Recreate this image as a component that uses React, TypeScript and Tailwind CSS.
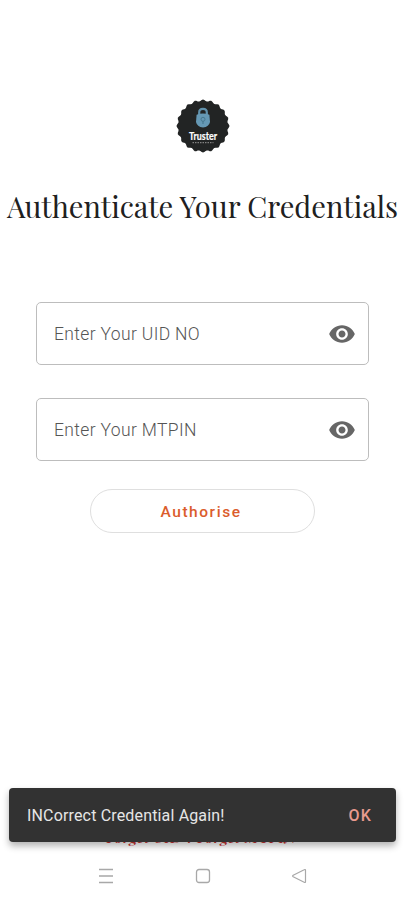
import React from "react";

function Badge() {
  const points = Array.from({ length: 120 }, (_, i) => {
    const a = (i / 120) * Math.PI * 2;
    const r = 25.6 + 0.9 * Math.cos(a * 20);
    return `${(27 + r * Math.sin(a)).toFixed(2)},${(27 - r * Math.cos(a)).toFixed(2)}`;
  }).join(" ");
  return (
    <svg className="ml-px h-[54px] w-[54px]" viewBox="0 0 54 54">
      <polygon points={points} fill="#222424" />
      <path d="M23.2 16v-2.6c0-4.6 7.6-4.6 7.6 0V16" fill="none" stroke="#6192ad" strokeWidth="2.2" />
      <path d="M20.6 15.8Q27 13.1 33.4 15.8L34 23Q33 27.9 27 28.5Q21 27.9 20 23Z" fill="#6598b4" />
      <circle cx="27" cy="20.3" r="2" fill="none" stroke="#487990" strokeWidth="1" />
      <path d="M27 22v3" stroke="#487990" strokeWidth="1.2" />
      <text x="13" y="40.5" textLength="28" lengthAdjust="spacingAndGlyphs" fill="#fff" stroke="#fff" strokeWidth=".2" className="font-['Lato'] text-[10.5px] font-bold">Truster</text>
      <path d="M16.5 43.7h21" stroke="#a5a5a5" strokeWidth=".9" strokeDasharray="1.5 1" />
    </svg>
  );
}

function Field({ label }: { label: string }) {
  return (
    <div className="flex h-[63px] w-[333px] items-center justify-between rounded-[5px] border-[1.5px] border-[#bdbdbd] pr-[12px] pl-[17px]">
      <span className="pt-px text-[17.5px] font-light tracking-[0.35px] text-[#555]">{label}</span>
      <svg className="h-[28px] w-[28px]" viewBox="0 0 24 24" fill="#666">
        <path d="M12 4.5C7 4.5 2.73 7.61 1 12c1.73 4.39 6 7.5 11 7.5s9.27-3.11 11-7.5c-1.73-4.39-6-7.5-11-7.5zM12 17c-2.76 0-5-2.24-5-5s2.24-5 5-5 5 2.24 5 5-2.24 5-5 5zm0-8c-1.66 0-3 1.34-3 3s1.34 3 3 3 3-1.34 3-3-1.34-3-3-3z" />
      </svg>
    </div>
  );
}

export default function App() {
  return (
    <main className="relative flex h-[900px] w-[404px] flex-col items-center overflow-hidden bg-white pt-[99px] font-['Roboto',sans-serif]">
      <Badge />
      <h1 className="mt-[31px] ml-[1px] h-[44px] text-[29.1px] leading-[44px] whitespace-nowrap text-[#202020] font-['Playfair_Display','Liberation_Serif',serif]">
        Authenticate Your Credentials
      </h1>
      <div className="mt-[74px] ml-[1px] flex flex-col gap-[33px]">
        <Field label="Enter Your UID NO" />
        <Field label="Enter Your MTPIN" />
      </div>
      <button className="mt-[28px] h-[44px] w-[225px] rounded-full border border-[#dfdfdf] pt-[3px] pr-[2px] text-[15.5px] font-medium tracking-[1.55px] text-[#db5c2c]">
        Authorise
      </button>
      <p className="mt-auto h-[25px] text-[15.6px] leading-[24px] font-semibold whitespace-nowrap text-[#c83232] italic font-['Playfair_Display','Liberation_Serif',serif]">
        Forget UID ? Forget MTPIN
      </p>
      <nav className="flex h-[50px] w-full items-center justify-between pt-[2px] pr-[96px] pl-[97px] text-[#a8a8a8]">
        <svg className="h-[18px] w-[18px]" viewBox="0 0 18 18" fill="none" stroke="currentColor" strokeWidth="1.3">
          <path d="M2 2.5h14M2 9h14M2 15.5h14" />
        </svg>
        <svg className="h-[18px] w-[18px]" viewBox="0 0 18 18" fill="none" stroke="currentColor" strokeWidth="1.3">
          <rect x="2.5" y="2.5" width="13" height="13" rx="2.5" />
        </svg>
        <svg className="h-[18px] w-[18px]" viewBox="0 0 18 18" fill="none" stroke="currentColor" strokeWidth="1.2" strokeLinejoin="round">
          <path d="M15.5 3.5v11q0 1.5-1.3.8L3.2 9.7q-1.1-.7 0-1.4l11-5.6q1.3-.7 1.3.8z" />
        </svg>
      </nav>
      <div className="absolute top-[788px] left-[9px] flex h-[54px] w-[387px] items-center justify-between rounded-[4px] bg-[#323232] pt-[2px] pr-[24px] pl-[18px] shadow-[0_4px_7px_rgba(0,0,0,0.3)]">
        <span className="text-[16px] tracking-[0.16px] text-[#e6e6e6]">INCorrect Credential Again!</span>
        <span className="text-[16px] font-medium tracking-[1.2px] text-[#e99a8e]">OK</span>
      </div>
    </main>
  );
}
